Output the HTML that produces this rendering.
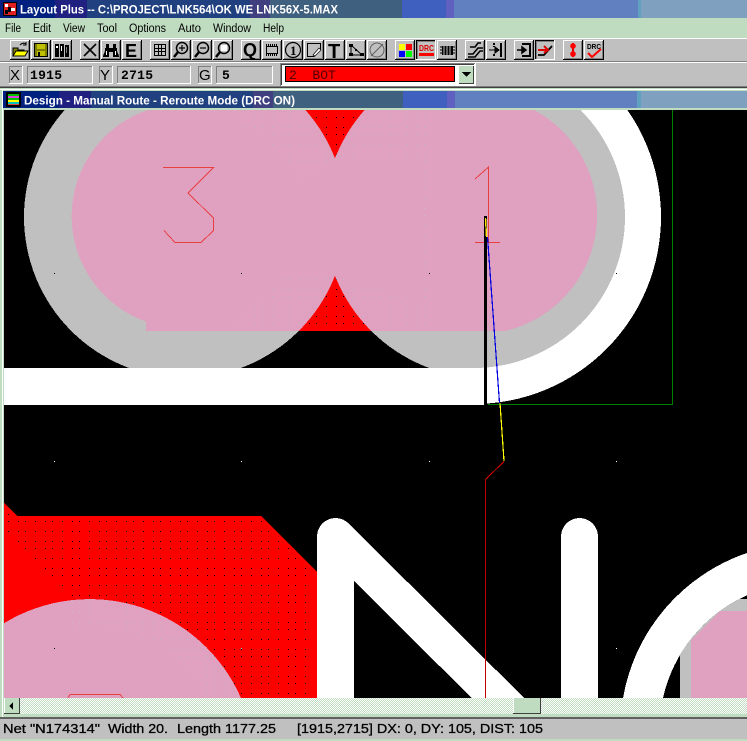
<!DOCTYPE html>
<html><head><meta charset="utf-8"><title>Layout Plus</title>
<style>html,body{margin:0;padding:0;background:#c0c0c0;width:747px;height:741px;overflow:hidden}svg{display:block}text{font-family:"Liberation Sans",sans-serif}</style></head>
<body>
<svg xmlns="http://www.w3.org/2000/svg" width="747" height="741" viewBox="0 0 747 741">
<defs>
<pattern id="pr1" patternUnits="userSpaceOnUse" width="27" height="27"><g fill="#000" shape-rendering="crispEdges"><rect x="19" y="9" width="1" height="1"/><rect x="2" y="9" width="1" height="1"/><rect x="12" y="9" width="1" height="1"/><rect x="19" y="19" width="1" height="1"/><rect x="2" y="19" width="1" height="1"/><rect x="12" y="19" width="1" height="1"/><rect x="19" y="26" width="1" height="1"/><rect x="2" y="26" width="1" height="1"/><rect x="12" y="26" width="1" height="1"/></g></pattern>
<pattern id="pf1" patternUnits="userSpaceOnUse" width="27" height="27"><g fill="#c8bcc4" shape-rendering="crispEdges"><rect x="19" y="9" width="1" height="1"/><rect x="2" y="9" width="1" height="1"/><rect x="12" y="9" width="1" height="1"/><rect x="19" y="19" width="1" height="1"/><rect x="2" y="19" width="1" height="1"/><rect x="12" y="19" width="1" height="1"/><rect x="19" y="26" width="1" height="1"/><rect x="2" y="26" width="1" height="1"/><rect x="12" y="26" width="1" height="1"/></g></pattern>
<pattern id="pr2" patternUnits="userSpaceOnUse" width="27" height="27"><g fill="#000" shape-rendering="crispEdges"><rect x="8" y="1" width="1" height="1"/><rect x="18" y="1" width="1" height="1"/><rect x="25" y="1" width="1" height="1"/><rect x="8" y="8" width="1" height="1"/><rect x="18" y="8" width="1" height="1"/><rect x="25" y="8" width="1" height="1"/><rect x="8" y="18" width="1" height="1"/><rect x="18" y="18" width="1" height="1"/><rect x="25" y="18" width="1" height="1"/></g></pattern>
<pattern id="pf2" patternUnits="userSpaceOnUse" width="27" height="27"><g fill="#c8bcc4" shape-rendering="crispEdges"><rect x="8" y="1" width="1" height="1"/><rect x="18" y="1" width="1" height="1"/><rect x="25" y="1" width="1" height="1"/><rect x="8" y="8" width="1" height="1"/><rect x="18" y="8" width="1" height="1"/><rect x="25" y="8" width="1" height="1"/><rect x="8" y="18" width="1" height="1"/><rect x="18" y="18" width="1" height="1"/><rect x="25" y="18" width="1" height="1"/></g></pattern>
<pattern id="dith" patternUnits="userSpaceOnUse" width="2" height="2"><rect width="2" height="2" fill="#c0dcc0"/><rect width="1" height="1" fill="#fff"/><rect x="1" y="1" width="1" height="1" fill="#fff"/></pattern>
<clipPath id="cv"><rect x="4" y="110" width="743" height="588"/></clipPath>
<clipPath id="rc"><circle cx="485" cy="217" r="161"/></clipPath>
<clipPath id="rx"><rect x="300" y="40" width="174" height="360"/></clipPath>
<clipPath id="wr"><rect x="474" y="0" width="273" height="420"/></clipPath>
<clipPath id="inner"><path d="M747 595.3A147.5 147.5 0 0 0 663 698H747Z"/></clipPath>
<clipPath id="pinkU"><circle cx="185" cy="217" r="161"/><circle cx="474" cy="217" r="151"/><path d="M339 60H474V380H339Z" clip-path="url(#rc)"/></clipPath>
<g id="b" shape-rendering="crispEdges"><rect width="20" height="20" fill="#c0c0c0"/><rect width="20" height="1" fill="#fff"/><rect width="1" height="20" fill="#fff"/><rect x="19" width="1" height="20" fill="#000"/><rect y="19" width="20" height="1" fill="#000"/><rect x="18" y="1" width="1" height="18" fill="#808080"/><rect x="1" y="18" width="18" height="1" fill="#808080"/></g>
<g id="d" shape-rendering="crispEdges"><rect width="20" height="20" fill="#c0c0c0"/><rect width="20" height="1" fill="#000"/><rect width="1" height="20" fill="#000"/><rect x="19" width="1" height="20" fill="#fff"/><rect y="19" width="20" height="1" fill="#fff"/><rect x="1" y="1" width="18" height="1" fill="#808080"/><rect x="1" y="1" width="1" height="18" fill="#808080"/></g>
</defs>

<!-- chrome backgrounds -->
<g shape-rendering="crispEdges">
<rect width="747" height="741" fill="#c0dcc0"/>
<rect x="0" y="0" width="55" height="18" fill="#002080"/><rect x="55" y="0" width="32" height="18" fill="#202080"/><rect x="87" y="0" width="163" height="18" fill="#204080"/><rect x="250" y="0" width="20" height="18" fill="#404080"/><rect x="270" y="0" width="132" height="18" fill="#406080"/><rect x="402" y="0" width="44" height="18" fill="#4060c0"/><rect x="446" y="0" width="8" height="18" fill="#6060c0"/><rect x="454" y="0" width="184" height="18" fill="#6080c0"/><rect x="638" y="0" width="3" height="18" fill="#60a0c0"/><rect x="641" y="0" width="106" height="18" fill="#80a0c0"/>
<rect x="0" y="38" width="747" height="1" fill="#fff"/>
<rect x="0" y="39" width="747" height="47" fill="#c0c0c0"/>
<rect x="0" y="61" width="747" height="1" fill="#808080"/>
<rect x="0" y="62" width="747" height="1" fill="#fff"/>
<rect x="0" y="86" width="747" height="1" fill="#808080"/>
<rect x="0" y="87" width="747" height="1" fill="#404040"/>
<rect x="0" y="89" width="747" height="1" fill="#fff"/>
<rect x="3" y="91" width="56" height="17" fill="#002080"/><rect x="59" y="91" width="32" height="17" fill="#202080"/><rect x="91" y="91" width="162" height="17" fill="#204080"/><rect x="253" y="91" width="20" height="17" fill="#404080"/><rect x="273" y="91" width="130" height="17" fill="#406080"/><rect x="403" y="91" width="44" height="17" fill="#4060c0"/><rect x="447" y="91" width="8" height="17" fill="#6060c0"/><rect x="455" y="91" width="182" height="17" fill="#6080c0"/><rect x="637" y="91" width="4" height="17" fill="#60a0c0"/><rect x="641" y="91" width="106" height="17" fill="#80a0c0"/>
<rect x="2" y="90" width="1" height="627" fill="#fff"/>
</g>

<!-- title -->
<g shape-rendering="crispEdges"><rect x="3" y="2" width="14" height="14" fill="#000"/><rect x="4" y="3" width="12" height="12" fill="#e02020"/><path d="M5 4h3v3H5zM11 8h4v3h-4z" fill="#fff"/><path d="M8 7h3v5H8zM5 10h3v4H5z" fill="#000"/></g>
<text x="20" y="13.5" font-size="12" font-weight="bold" fill="#fff" textLength="318" lengthAdjust="spacingAndGlyphs">Layout Plus -- C:\PROJECT\LNK564\OK WE LNK56X-5.MAX</text>
<g font-size="11.5" fill="#000">
<text x="5" y="32" textLength="16" lengthAdjust="spacingAndGlyphs">File</text><text x="33" y="32" textLength="18" lengthAdjust="spacingAndGlyphs">Edit</text><text x="63" y="32" textLength="22" lengthAdjust="spacingAndGlyphs">View</text><text x="97" y="32" textLength="20" lengthAdjust="spacingAndGlyphs">Tool</text><text x="129" y="32" textLength="37" lengthAdjust="spacingAndGlyphs">Options</text><text x="178" y="32" textLength="23" lengthAdjust="spacingAndGlyphs">Auto</text><text x="213" y="32" textLength="38" lengthAdjust="spacingAndGlyphs">Window</text><text x="263" y="32" textLength="21" lengthAdjust="spacingAndGlyphs">Help</text>
</g>

<!-- toolbar buttons -->
<use href="#b" x="10" y="40"/><use href="#b" x="31" y="40"/><use href="#b" x="52" y="40"/><use href="#b" x="80" y="40"/><use href="#b" x="101" y="40"/><use href="#b" x="122" y="40"/><use href="#b" x="150" y="40"/><use href="#b" x="171" y="40"/><use href="#b" x="192" y="40"/><use href="#b" x="213" y="40"/><use href="#b" x="241" y="40"/><use href="#b" x="262" y="40"/><use href="#b" x="283" y="40"/><use href="#b" x="304" y="40"/><use href="#b" x="325" y="40"/><use href="#b" x="346" y="40"/><use href="#b" x="367" y="40"/><use href="#b" x="395" y="40"/><use href="#d" x="416" y="40"/><use href="#b" x="437" y="40"/><use href="#b" x="465" y="40"/><use href="#b" x="486" y="40"/><use href="#b" x="514" y="40"/><use href="#d" x="535" y="40"/><use href="#b" x="563" y="40"/><use href="#b" x="584" y="40"/>

<!-- icons -->
<g transform="translate(10,40)"><path d="M3 16V8H8V10H14V12" fill="#808000" stroke="#000"/><path d="M3 16L6 11H18L15 16Z" fill="#ff0" stroke="#000"/><path d="M10 5Q13 2 16 4M16 2V5H13" fill="none" stroke="#000"/></g>
<g transform="translate(31,40)" shape-rendering="crispEdges"><rect x="3" y="3" width="14" height="14" fill="#000"/><rect x="4" y="4" width="12" height="12" fill="#808000"/><rect x="6" y="4" width="8" height="5" fill="#c0c000"/><rect x="6" y="11" width="8" height="5" fill="#c0c000"/><rect x="7" y="12" width="2" height="4" fill="#000"/></g>
<g transform="translate(52,40)" shape-rendering="crispEdges"><rect x="3" y="4" width="4" height="13" fill="#000"/><rect x="8" y="4" width="4" height="13" fill="#000"/><rect x="13" y="5" width="4" height="12" fill="#000"/><rect x="4" y="6" width="2" height="2" fill="#fff"/><rect x="9" y="6" width="1" height="5" fill="#fff"/><rect x="14" y="7" width="1" height="6" fill="#808080"/></g>
<g transform="translate(80,40)"><path d="M4 4L16 16M16 4L4 16" stroke="#000" stroke-width="1.6"/></g>
<g transform="translate(101,40)" shape-rendering="crispEdges"><path d="M5 4H8V8H12V4H15V8H16V11L18 16V17H12V12H8V17H2V16L4 11V8H5Z" fill="#000"/><rect x="5" y="11" width="1" height="4" fill="#fff"/><rect x="14" y="11" width="1" height="4" fill="#fff"/></g>
<text x="125" y="57" font-size="18" font-weight="bold" fill="#000">E</text>
<g transform="translate(150,40)" shape-rendering="crispEdges" fill="none" stroke="#000"><path d="M4.5 4.5H15.5V15.5H4.5ZM4.5 8.5H15.5M4.5 11.5H15.5M8.5 4.5V15.5M11.5 4.5V15.5"/></g>
<g transform="translate(171,40)"><circle cx="11" cy="8" r="5.5" fill="#c0c0c0" stroke="#000" stroke-width="1.5"/><path d="M7 12L3 17" stroke="#000" stroke-width="2.4"/><path d="M8 8H14M11 5V11" stroke="#000" stroke-width="1.2"/></g>
<g transform="translate(192,40)"><circle cx="11" cy="8" r="5.5" fill="#c0c0c0" stroke="#000" stroke-width="1.5"/><path d="M7 12L3 17" stroke="#000" stroke-width="2.4"/><path d="M8 8H14" stroke="#000" stroke-width="1.2"/></g>
<g transform="translate(213,40)"><circle cx="11" cy="8" r="5.5" fill="#c0c0c0" stroke="#000" stroke-width="1.5"/><path d="M7 12L3 17" stroke="#000" stroke-width="2.4"/><rect x="8" y="5" width="6" height="6" fill="#fff"/></g>
<text x="243" y="56" font-size="18" font-weight="bold" fill="#000">Q</text>
<g transform="translate(262,40)" shape-rendering="crispEdges"><rect x="4.5" y="6.5" width="11" height="7" fill="#c0c0c0" stroke="#000"/><path d="M4 4.5H16M4 15.5H16" stroke="#000" stroke-dasharray="1 1" fill="none"/><path d="M4 5.5H16M4 14.5H16" stroke="#000" stroke-dasharray="1 1" fill="none"/></g>
<circle cx="293" cy="50" r="7.5" fill="none" stroke="#000" stroke-width="1.2"/><text x="290" y="55" font-size="13" font-weight="bold" style="font-family:'Liberation Serif',serif" fill="#000">1</text>
<g transform="translate(304,40)"><path d="M3.5 3.5H16.5V10L10 16.5H3.5Z" fill="#c0c0c0" stroke="#000"/><path d="M9 15L15 8L17 10L11 16Z" fill="#fff" stroke="#000" stroke-width=".7"/></g>
<text x="328" y="58" font-size="20" font-weight="bold" fill="#000">T</text>
<g transform="translate(346,40)"><path d="M5 5V15H16Z" fill="none" stroke="#000"/><path d="M3 4h4v3H3zM3 13h4v3H3zM14 13h4v3h-4zM9 9h2v2H9z" fill="#000"/></g>
<g transform="translate(367,40)" fill="none" stroke="#606060"><circle cx="10" cy="10" r="7"/><path d="M4 16L16 4"/></g>
<g transform="translate(395,40)" shape-rendering="crispEdges"><rect x="4" y="4" width="6" height="6" fill="#ff0"/><rect x="11" y="4" width="6" height="6" fill="#f00"/><rect x="4" y="11" width="6" height="6" fill="#00f"/><rect x="11" y="11" width="6" height="6" fill="#0f0"/></g>
<text x="419" y="51" font-size="8.5" font-weight="bold" fill="#e00000" textLength="15" lengthAdjust="spacingAndGlyphs">DRC</text><rect x="419" y="53" width="15" height="3" fill="#f00" shape-rendering="crispEdges"/>
<g transform="translate(437,40)" shape-rendering="crispEdges"><rect x="5" y="6" width="11" height="9" fill="#000"/><path d="M3 7H18M3 10H18M3 13H18" stroke="#000"/><path d="M7 5V16M10 5V16M13 5V16" stroke="#c0c0c0" stroke-width=".8"/></g>
<g transform="translate(465,40)"><path d="M3 14H8L13 8H18M3 17H10L15 11H18M5 7H10L13 3H16" fill="none" stroke="#000" stroke-width="1.6"/></g>
<g transform="translate(486,40)" shape-rendering="crispEdges"><path d="M15 3V17" stroke="#000" stroke-width="2"/><path d="M8 3V7M8 14V17" stroke="#000" stroke-width="2" stroke-dasharray="2 1"/><path d="M3 10H13M9 7L13 10L9 13Z" stroke="#000" fill="#000"/></g>
<g transform="translate(514,40)"><path d="M8 4H16V16H8" fill="none" stroke="#000" stroke-width="2"/><path d="M3 10H11M8 7L12 10L8 13Z" stroke="#000" stroke-width="1.5" fill="#000"/></g>
<g transform="translate(535,40)"><path d="M3 15H9L17 6" fill="none" stroke="#000" stroke-width="1.8"/><path d="M3 10H12M9 6L13 10L9 13" fill="none" stroke="#e00000" stroke-width="2"/></g>
<g transform="translate(563,40)"><rect x="9" y="3" width="2" height="14" fill="#e00000"/><circle cx="10" cy="6" r="2.8" fill="#f00"/><circle cx="10" cy="14" r="2.8" fill="#f00"/></g>
<text x="587" y="49" font-size="7.5" font-weight="bold" fill="#000" textLength="14" lengthAdjust="spacingAndGlyphs">DRC</text><path d="M588 53L592 57L601 49" fill="none" stroke="#f00" stroke-width="2"/>

<!-- coord row -->
<g shape-rendering="crispEdges" fill="none">
<path d="M9.5 83V66.5H22M27.5 83V66.5H92M99.5 83V66.5H112M117.5 83V66.5H190M198.5 83V66.5H211M216.5 83V66.5H272" stroke="#808080"/>
<path d="M22.5 66V83.5H9M92.5 66V83.5H27M112.5 66V83.5H99M190.5 66V83.5H117M211.5 66V83.5H198M272.5 66V83.5H216" stroke="#fff"/>
</g>
<text x="10" y="80" font-size="15" fill="#000">X</text><text x="100" y="80" font-size="15" fill="#000">Y</text><text x="199" y="80" font-size="15" fill="#000">G</text>
<g font-weight="bold" font-size="13" fill="#000">
<text x="30" y="79" textLength="32" style="font-family:'Liberation Mono',monospace">1915</text>
<text x="121" y="79" textLength="32" style="font-family:'Liberation Mono',monospace">2715</text>
<text x="222" y="79" style="font-family:'Liberation Mono',monospace">5</text>
</g>
<g shape-rendering="crispEdges">
<rect x="280" y="63" width="196" height="23" fill="#fff"/>
<rect x="280" y="63" width="195" height="1" fill="#808080"/><rect x="280" y="63" width="1" height="23" fill="#808080"/>
<rect x="281" y="64" width="193" height="1" fill="#404040"/><rect x="281" y="64" width="1" height="21" fill="#404040"/>
<rect x="285" y="66" width="170" height="16" fill="#000"/>
<rect x="286" y="67" width="168" height="14" fill="#f00"/>
<rect x="459" y="66" width="15" height="18" fill="#c0dcc0"/>
<rect x="473" y="66" width="1" height="18" fill="#404040"/><rect x="459" y="83" width="15" height="1" fill="#404040"/>
<path d="M462 72H471L466.5 77Z" fill="#000"/>
</g>
<text x="289" y="79" font-size="13" fill="#500000" style="font-family:'Liberation Mono',monospace">2&#160;&#160;BOT</text>

<!-- design title -->
<g shape-rendering="crispEdges"><rect x="6" y="92" width="15" height="15" fill="#000"/><rect x="8" y="94" width="11" height="2" fill="#00c000"/><rect x="8" y="96" width="11" height="2" fill="#e040e0"/><rect x="8" y="98" width="11" height="2" fill="#00c000"/><rect x="8" y="100" width="11" height="2" fill="#ffff00"/><rect x="8" y="102" width="11" height="2" fill="#00c0c0"/><rect x="8" y="104" width="11" height="1" fill="#e04040"/></g>
<text x="24" y="104.5" font-size="12" font-weight="bold" fill="#fff" textLength="271" lengthAdjust="spacingAndGlyphs">Design - Manual Route - Reroute Mode (DRC ON)</text>

<!-- canvas -->
<g clip-path="url(#cv)">
<rect x="4" y="110" width="743" height="588" fill="#000" shape-rendering="crispEdges"/>
<g shape-rendering="crispEdges">
<!-- red diamond -->
<rect x="290" y="110" width="90" height="221" fill="#f00"/>
<rect x="290" y="110" width="90" height="221" fill="url(#pr1)"/>
<!-- white ring right half and gray pads -->
<circle cx="474" cy="217" r="187" fill="#fff" clip-path="url(#wr)"/>
<circle cx="185" cy="217" r="161" fill="#c0c0c0"/>
<g clip-path="url(#rx)"><circle cx="485" cy="217" r="161" fill="#c0c0c0"/></g>
<circle cx="474" cy="217" r="151" fill="#c0c0c0"/>
<!-- pink -->
<g clip-path="url(#pinkU)">
<path d="M148 110A112 112 0 0 0 147 322H146V331H505A119 119 0 0 0 534 110Z" fill="#e0a0c0"/>
<path d="M245 110H425V331H225L245 312L282 279L340 276L420 300V160L340 157L299 188L282 157L262 134L245 128Z" fill="url(#pf1)"/>
</g>
<!-- bar -->
<rect x="4" y="368" width="482" height="37" fill="#fff"/>

<!-- lower red -->
<path d="M4 503L17 516H261L317 572V698H4Z" fill="#f00"/>
<path d="M7 513L18 517H262L309 565V698H72V600L7 535Z" fill="url(#pr2)"/>
<path d="M4 623.2A165 165 0 0 1 241 698H4Z" fill="#e0a0c0"/>
<path d="M72 600A165 165 0 0 1 241 698H208A135 135 0 0 0 72 630Z" fill="url(#pf2)"/>

<!-- N -->
<path d="M335.5 710V536.5L511 711M579.5 710V536.5" fill="none" stroke="#fff" stroke-width="37" stroke-linecap="round" stroke-linejoin="round"/>

<!-- lower right pad -->
<path d="M747 553A187 187 0 0 0 623 698H747Z" fill="#fff"/>
<path d="M747 595.3A147.5 147.5 0 0 0 663 698H747Z" fill="#000"/>
<rect x="680" y="599" width="67" height="99" fill="#c0c0c0" clip-path="url(#inner)"/>
<path d="M691 698V640L720 611H747V698Z" fill="#e0a0c0"/>

<!-- green outline -->
<path d="M488 404.5H672.5V110" fill="none" stroke="#008000"/>
<!-- grid points -->
<g fill="#000"><rect x="54" y="273" width="1" height="1"/><rect x="241" y="273" width="1" height="1"/><rect x="429" y="273" width="1" height="1"/><rect x="616" y="273" width="1" height="1"/><rect x="54" y="648" width="1" height="1"/></g>
<g fill="#fff"><rect x="54" y="461" width="1" height="1"/><rect x="241" y="461" width="1" height="1"/><rect x="429" y="461" width="1" height="1"/><rect x="616" y="461" width="1" height="1"/><rect x="429" y="648" width="1" height="1"/><rect x="616" y="648" width="1" height="1"/></g>
<rect x="241" y="648" width="1" height="1" fill="#60e0e0"/>
</g>

<!-- silkscreen line art -->
<g fill="none" stroke="#e84040" shape-rendering="crispEdges">
<path d="M163 167.5H213.5L188 193L213.5 218V230.5L201 242.5H175L164 230.5"/>
<path d="M68 698L70 694.5H120L123 698"/>
<path d="M475 179L488.5 167V242M475 242.5H500"/>
</g>
<!-- active trace -->
<g shape-rendering="crispEdges" fill="none">
<path d="M485.5 405V218" stroke="#000" stroke-width="3"/>
<rect x="484" y="216" width="3" height="3" fill="#000"/>
<path d="M485.5 218L486.5 237" stroke="#ffe000" stroke-width="1.4"/>
<path d="M487.5 237L499.5 403" stroke="#0000e0" stroke-width="1.2"/>
<path d="M500 403L504 461" stroke="#ffff00" stroke-width="1.2"/>
<path d="M504 461.5L485.5 479.5" stroke="#e00000"/>
<path d="M485.5 479.5V698" stroke="#c00000"/>
</g>
</g>

<!-- scrollbar -->
<g shape-rendering="crispEdges">
<rect x="4" y="698" width="743" height="16" fill="url(#dith)"/>
<rect x="4" y="698" width="16" height="16" fill="#c0dcc0"/><rect x="4" y="698" width="1" height="16" fill="#fff"/><rect x="19" y="698" width="1" height="16" fill="#404040"/><rect x="4" y="713" width="16" height="1" fill="#404040"/>
<path d="M9 706L13 702V710Z" fill="#000"/>
<rect x="513" y="698" width="28" height="16" fill="#c0dcc0"/><rect x="513" y="698" width="1" height="16" fill="#fff"/><rect x="540" y="698" width="1" height="16" fill="#404040"/><rect x="513" y="713" width="28" height="1" fill="#404040"/>
<!-- status -->
<rect x="0" y="717" width="747" height="2" fill="#606060"/>
<rect x="0" y="719" width="747" height="20" fill="#c0c0c0"/>
</g>
<g font-size="13" fill="#000" stroke="#000" stroke-width=".3">
<text x="3" y="733" textLength="97" lengthAdjust="spacingAndGlyphs">Net "N174314"</text>
<text x="108" y="733" textLength="60" lengthAdjust="spacingAndGlyphs">Width 20.</text>
<text x="177" y="733" textLength="99" lengthAdjust="spacingAndGlyphs">Length 1177.25</text>
<text x="297" y="733" textLength="246" lengthAdjust="spacingAndGlyphs">[1915,2715] DX: 0, DY: 105, DIST: 105</text>
</g>
</svg>
</body></html>
